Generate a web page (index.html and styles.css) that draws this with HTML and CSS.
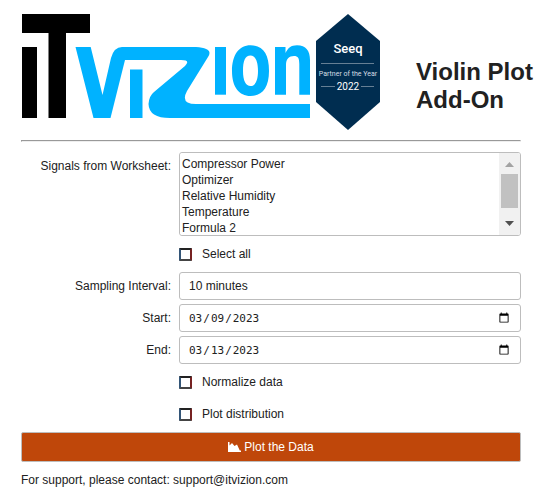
FILE: index.html
```html
<!DOCTYPE html>
<html lang="en-US">
<head>
<meta charset="utf-8">
<title>Violin Plot Add-On</title>
<link rel="stylesheet" href="styles.css">
</head>
<body>
<header class="header">
  <svg class="logo" width="288" height="104" viewBox="22 14 288 104" role="img" aria-label="ITVizion">
    <rect x="22" y="14" width="68" height="19"/>
    <rect x="48.500" y="14" width="17.500" height="104"/>
    <rect x="22" y="47" width="15" height="71"/>
    <g fill="#00b2ff">
      <path d="M75.500 47H90.700L102.500 95L111 58Q114 47 122 47H196Q214 48 208 57L187 91Q180 104 196 104H310V118H170Q149 118 148.500 104Q149 96 154 92L185 66Q191 60 181 60H125L110.500 118H93.500Z"/>
      <rect x="130" y="69.500" width="12.500" height="48.500"/>
      <rect x="215" y="47" width="11" height="47.700"/>
      <path fill-rule="evenodd" d="M250.500 45.300C263 45.300 269 54 269 71S262 96 250.500 96S232 87 232 71S239 45.300 250.500 45.300ZM250.500 55.500C245 55.500 243 61 243 71S246 86 250.500 86S258 81 258 71S255 55.500 250.500 55.500Z"/>
      <path d="M275 47H285.500V53C288 48 291 45.300 297 45.300C306 45.300 310 51 310 60V94.700H299.300V64C299.300 58 298 56 294 56C289 56 286 59 286 65V94.700H275Z"/>
    </g>
  </svg>
  <svg class="badge" width="64" height="116" viewBox="316 14 64 116" role="img" aria-label="Seeq Partner of the Year 2022">
    <path fill="#002d50" d="M348 14L380 41V102L348 130L316 102V41Z"/>
    <path stroke="#667f94" d="M321 63.500H374M321 86.500H335M361 86.500H374"/>
    <text class="badge-brand" x="348" y="53">Seeq</text>
    <text class="badge-award" x="348" y="76">Partner of the Year</text>
    <text class="badge-year" x="348" y="90">2022</text>
  </svg>
  <h1 class="title">Violin Plot<br>Add-On</h1>
</header>
<hr class="rule">
<form class="form">
  <label class="label" for="signals">Signals from Worksheet:</label>
  <div class="list">
    <select class="signals" id="signals" multiple size="5">
      <option>Compressor Power</option>
      <option>Optimizer</option>
      <option>Relative Humidity</option>
      <option>Temperature</option>
      <option>Formula 2</option>
    </select>
    <svg class="scrollbar" width="21" height="82" viewBox="0 0 21 82" aria-hidden="true">
      <path fill="#f1f1f1" d="M0 0H21V82H0Z"/>
      <path fill="#a3a3a3" d="M6 14L10.500 9L15 14Z"/>
      <path fill="#c1c1c1" d="M2 21H19V55H2Z"/>
      <path fill="#505050" d="M6 68L10.500 73L15 68Z"/>
    </svg>
  </div>
  <label class="check"><input type="checkbox">Select all</label>
  <label class="label" for="interval">Sampling Interval:</label>
  <input class="field" id="interval" type="text" value="10 minutes">
  <label class="label" for="start">Start:</label>
  <input class="field date" id="start" type="date" value="2023-03-09">
  <label class="label" for="end">End:</label>
  <input class="field date" id="end" type="date" value="2023-03-13">
  <label class="check"><input type="checkbox">Normalize data</label>
  <label class="check"><input type="checkbox">Plot distribution</label>
  <button class="submit" type="button">
    <svg width="13" height="10" viewBox="0 0 13 10" fill="#fff" aria-hidden="true"><path d="M0 0H1.500V8.500H13V10H0ZM1 9V4L4 1L6.500 4L9 2.500L12 9Z"/></svg>
    Plot the Data
  </button>
</form>
<footer class="support">For support, please contact: support@itvizion.com</footer>
</body>
</html>
```
FILE: styles.css
```css
* { box-sizing: border-box; }

body {
  margin: 0;
  padding: 14px 37px 12px 21px;
  background: #fff;
  color: #212121;
  font: 12px/16px "Liberation Sans", Arial, sans-serif;
}

.header {
  display: flex;
  align-items: flex-start;
  height: 126px;
}

.logo {
  flex: none;
  margin-left: 1px;
}

.badge {
  flex: none;
  margin-left: 6px;
}

.badge text {
  fill: #fff;
  text-anchor: middle;
  font-family: Roboto, sans-serif;
}

.badge .badge-brand {
  font-size: 13px;
  font-weight: 500;
}

.badge .badge-award {
  font-size: 7px;
  fill: #d5dde4;
}

.badge .badge-year { font-size: 10px; }

.title {
  flex: none;
  margin: 44px 0 0 36px;
  font-size: 24px;
  line-height: 28px;
}

.rule {
  height: 2px;
  margin: 0 0 10px;
  border: 1px solid;
  border-color: #999 #eee #eee #999;
}

.form {
  display: grid;
  grid-template-columns: 150px 1fr;
  gap: 4px 8px;
}

.label {
  line-height: 28px;
  text-align: right;
}

.list {
  position: relative;
  height: 84px;
  overflow: hidden;
  border: 1px solid #bdbdbd;
  border-radius: 3px;
}

.signals {
  display: block;
  width: 100%;
  height: 100%;
  margin: 0;
  padding: 4px 2px 0;
  overflow: hidden;
  border: 0;
  background: #fff;
  color: inherit;
  font: inherit;
}

.signals option {
  height: 16px;
  min-height: 0;
  padding: 0;
  line-height: 16px;
}

.scrollbar {
  position: absolute;
  top: 0;
  right: 0;
}

.check {
  grid-column: 2;
  display: flex;
  align-items: center;
  gap: 10px;
  height: 28px;
}

.check input {
  appearance: none;
  width: 13px;
  height: 13px;
  margin: 0;
  border: 2px solid;
  border-color: #222 #722 #444 #357;
  border-radius: 1px;
}

.field {
  width: 100%;
  min-width: 0;
  height: 28px;
  margin: 0;
  padding: 0 9px;
  border: 1px solid #bdbdbd;
  border-radius: 3px;
  background: #fff;
  color: #212121;
  font: inherit;
}

.date {
  padding: 0 8px;
  font: 11px "DejaVu Sans Mono", monospace;
}

.date::-webkit-calendar-picker-indicator {
  width: 12px;
  height: 12px;
}

.submit {
  grid-column: 1 / -1;
  display: flex;
  align-items: center;
  justify-content: center;
  gap: 3px;
  height: 30px;
  padding: 0;
  border: 1px solid #bdbdbd;
  border-radius: 2px;
  background: #bf470a;
  color: #fff;
  font: 500 12px/16px "Liberation Sans", Arial, sans-serif;
}

.support { margin-top: 10px; }
```
